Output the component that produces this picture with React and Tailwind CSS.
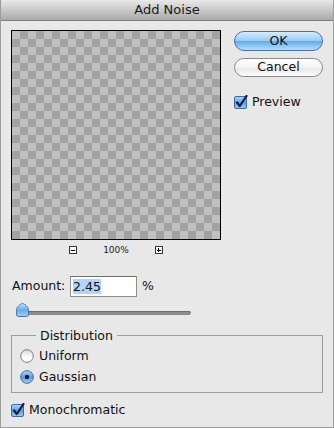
import React from "react";

const font = { fontFamily: '"DejaVu Sans", "Liberation Sans", sans-serif' };

function CheckBox() {
  return (
    <svg width="14" height="14" viewBox="0 0 14 14" className="shrink-0">
      <defs>
        <linearGradient id="cbg" x1="0" y1="0" x2="0" y2="1">
          <stop offset="0" stopColor="#b4d8f8" />
          <stop offset="0.5" stopColor="#5d9fe2" />
          <stop offset="1" stopColor="#93cbf7" />
        </linearGradient>
      </defs>
      <rect x="0.5" y="1.5" width="12" height="12" rx="1.5" fill="url(#cbg)" stroke="#3d6aa3" />
      <path d="M3 7.5 L5.8 11 L12.5 1" stroke="#0f1c3c" strokeWidth="2.2" fill="none" strokeLinecap="round" strokeLinejoin="round" />
    </svg>
  );
}

function Radio({ checked }) {
  return (
    <svg width="14" height="14" viewBox="0 0 14 14" className="shrink-0">
      <defs>
        <linearGradient id="rw" x1="0" y1="0" x2="0" y2="1">
          <stop offset="0" stopColor="#d8d8d8" />
          <stop offset="0.6" stopColor="#ffffff" />
          <stop offset="1" stopColor="#ffffff" />
        </linearGradient>
        <linearGradient id="rb" x1="0" y1="0" x2="0" y2="1">
          <stop offset="0" stopColor="#b2d7f8" />
          <stop offset="0.5" stopColor="#5b9de0" />
          <stop offset="1" stopColor="#9ed2f9" />
        </linearGradient>
      </defs>
      <circle cx="7" cy="7" r="6.3" fill={checked ? "url(#rb)" : "url(#rw)"} stroke={checked ? "#3d6aa3" : "#7d7d7d"} />
      {checked && <circle cx="7" cy="7" r="2.2" fill="#14182a" />}
    </svg>
  );
}

export default function App() {
  return (
    <div
      className="w-[334px] h-[428px] bg-[#e8e8e8] border-x border-b border-[#9c9c9c] flex flex-col text-[#111] overflow-hidden"
      style={font}
    >
      {/* Title bar */}
      <div className="h-[21px] shrink-0 bg-gradient-to-b from-[#e9e9e9] to-[#a9a9a9] border-b border-[#7e7e7e] flex items-center justify-center text-[13px] text-[#1a1a1a]">
        Add Noise
      </div>

      <div className="pl-[10px] pr-[10px] flex flex-col">
        {/* Top row */}
        <div className="flex items-start mt-[9px]">
          <div className="flex flex-col">
            <div className="w-[210px] h-[210px] border border-black bg-[conic-gradient(#a2a2a2_25%,#c0c0c0_0_50%,#a2a2a2_0_75%,#c0c0c0_0)] bg-[length:16px_16px]" />
            <div className="w-[210px] flex items-center justify-center gap-[26px] mt-[5px] h-[10px]">
              <div className="w-[8px] h-[8px] border border-[#333] bg-white flex items-center justify-center">
                <div className="w-[4px] h-px bg-black" />
              </div>
              <div className="text-[9px] leading-none text-[#222]">100%</div>
              <div className="w-[8px] h-[8px] border border-[#333] bg-white flex items-center justify-center relative">
                <div className="w-[4px] h-px bg-black" />
                <div className="absolute w-px h-[4px] bg-black" />
              </div>
            </div>
          </div>

          <div className="ml-[13px] mt-[1px] flex flex-col w-[89px]">
            <div className="h-[20px] rounded-full border border-[#4a6fa5] bg-[linear-gradient(#d8ecfc,#97c9f5_50%,#65a9ea_51%,#b4defc)] flex items-center justify-center text-[12.5px]">
              OK
            </div>
            <div className="h-[19px] mt-[7px] rounded-full border border-[#8a8a8a] bg-[linear-gradient(#ffffff,#f4f4f4_50%,#e6e6e6_51%,#fdfdfd)] flex items-center justify-center text-[12.5px]">
              Cancel
            </div>
            <div className="flex items-center gap-[4px] mt-[16px] text-[12.5px]">
              <CheckBox />
              <span>Preview</span>
            </div>
          </div>
        </div>

        {/* Amount */}
        <div className="flex items-center mt-[21px] text-[12.5px]">
          <span className="ml-[1px] w-[58px]">Amount:</span>
          <div className="w-[67px] h-[21px] bg-white border border-[#8e8e8e] border-t-[#6f6f6f] flex items-center pl-[2px]">
            <span className="bg-[#b3d4fd] leading-[15px]">2.45</span>
          </div>
          <span className="ml-[5px]">%</span>
        </div>

        {/* Slider */}
        <div className="relative ml-[5px] mt-[6px] w-[175px] h-[13px]">
          <div className="absolute left-[1px] right-0 top-[8px] h-[4px] rounded-full bg-[#8c8c8c] border-t border-[#6c6c6c]" />
          <svg width="13" height="14" viewBox="0 0 13 14" className="absolute left-0 top-0">
            <defs>
              <linearGradient id="th" x1="0" y1="0" x2="0" y2="1">
                <stop offset="0" stopColor="#c2e0fa" />
                <stop offset="0.5" stopColor="#6aa9e6" />
                <stop offset="1" stopColor="#9fd0f8" />
              </linearGradient>
            </defs>
            <path d="M6.5 0.5 C8.5 0.5 12.5 4.5 12.5 6.5 L12.5 11.5 Q12.5 13.5 10.5 13.5 L2.5 13.5 Q0.5 13.5 0.5 11.5 L0.5 6.5 C0.5 4.5 4.5 0.5 6.5 0.5Z" fill="url(#th)" stroke="#4b74aa" />
          </svg>
        </div>

        {/* Distribution */}
        <fieldset className="mt-[12px] w-[312px] border border-[#9d9d9d] pl-[8px] pb-[8px]">
          <legend className="ml-[16px] px-[4px] text-[12.5px] leading-[15px]">Distribution</legend>
          <div className="flex items-center gap-[5px] mt-[6px] h-[14px] text-[12.5px]">
            <Radio />
            <span>Uniform</span>
          </div>
          <div className="flex items-center gap-[5px] mt-[7px] h-[14px] text-[12.5px]">
            <Radio checked />
            <span>Gaussian</span>
          </div>
        </fieldset>

        <div className="flex items-center gap-[4px] mt-[8px] text-[12.5px]">
          <CheckBox />
          <span>Monochromatic</span>
        </div>
      </div>
    </div>
  );
}
